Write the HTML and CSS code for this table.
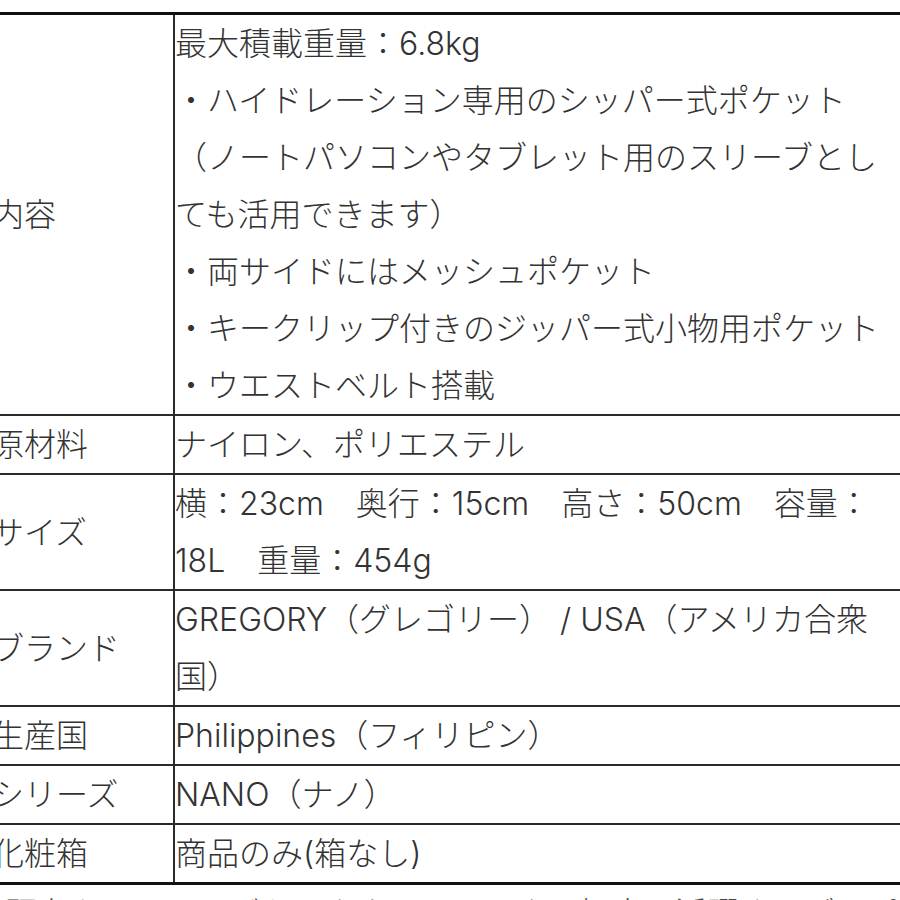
FILE: index.html
```html
<!DOCTYPE html>
<html lang="ja">
<head>
<meta charset="utf-8">
<link rel="stylesheet" href="styles.css">
</head>
<body>
<div class="page">
<table class="spec">
<tr>
<th>内容</th>
<td>最大積載重量：6.8kg<br>・ハイドレーション専用のシッパー式ポケット<br>（ノートパソコンやタブレット用のスリーブとし<br>ても活用できます）<br>・両サイドにはメッシュポケット<br>・キークリップ付きのジッパー式小物用ポケット<br>・ウエストベルト搭載</td>
</tr>
<tr>
<th>原材料</th>
<td>ナイロン、ポリエステル</td>
</tr>
<tr>
<th>サイズ</th>
<td>横：23cm　奥行：15cm　高さ：50cm　容量：<br>18L　重量：454g</td>
</tr>
<tr>
<th>ブランド</th>
<td>GREGORY（グレゴリー） / USA（アメリカ合衆<br>国）</td>
</tr>
<tr>
<th>生産国</th>
<td>Philippines（フィリピン）</td>
</tr>
<tr>
<th>シリーズ</th>
<td>NANO（ナノ）</td>
</tr>
<tr>
<th>化粧箱</th>
<td>商品のみ(箱なし)</td>
</tr>
</table>
<p class="note">現在もハイキングからタウンユースまで幅広く活躍するデイパックです。</p>
</div>
</body>
</html>
```
FILE: styles.css
```css
html, body {
  margin: 0;
  padding: 0;
  background: #fff;
  overflow: hidden;
}
.page {
  width: 960px;
  margin-left: -8px;
  padding-top: 12px;
  font-family: "Inter", "Noto Sans CJK JP", sans-serif;
  font-size: 32px;
  font-weight: 300;
  line-height: 57px;
  color: #333;
}
.spec {
  border-collapse: collapse;
  width: 960px;
  border-top: 3px solid #111;
  border-bottom: 3px solid #111;
}
.spec th, .spec td {
  padding: 0;
  border-top: 2px solid #2a2a2a;
  border-bottom: 2px solid #2a2a2a;
  vertical-align: middle;
  font-weight: 300;
  text-align: left;
  white-space: nowrap;
}
.spec th {
  width: 181px;
  border-right: 2px solid #2a2a2a;
}
.note {
  margin: 0;
  padding-left: 14px;
  white-space: nowrap;
  line-height: 58px;
  color: #444;
}
```
